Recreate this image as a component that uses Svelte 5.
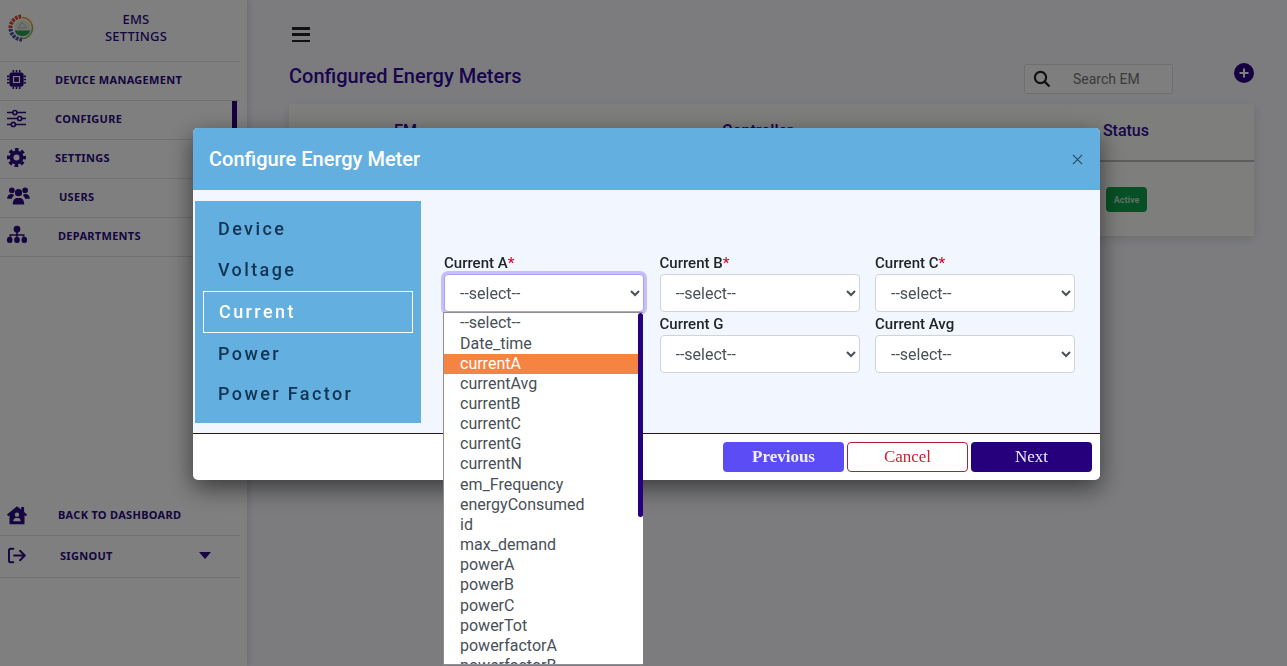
<script lang="ts">
  const navTop = [
    { label: 'DEVICE MANAGEMENT', icon: 'chip', indent: 55 },
    { label: 'CONFIGURE', icon: 'sliders', indent: 55, active: true },
    { label: 'SETTINGS', icon: 'cog', indent: 55 },
    { label: 'USERS', icon: 'users', indent: 59 },
    { label: 'DEPARTMENTS', icon: 'sitemap', indent: 58 }
  ];
  const tabs = ['Device', 'Voltage', 'Current', 'Power', 'Power Factor'];
  const fields = [
    { label: 'Current A', required: true, focused: true },
    { label: 'Current B', required: true },
    { label: 'Current C', required: true },
    { label: 'Current N', required: false, covered: true },
    { label: 'Current G', required: false },
    { label: 'Current Avg', required: false }
  ];
  const columns = ['--select--', 'Date_time', 'currentA', 'currentAvg', 'currentB', 'currentC', 'currentG', 'currentN',
    'em_Frequency', 'energyConsumed', 'id', 'max_demand', 'powerA', 'powerB', 'powerC', 'powerTot', 'powerfactorA', 'powerfactorB'];
</script>

{#snippet icon(name: string)}
  {#if name === 'users'}
    <svg class="nav-icon wide" viewBox="0 0 24 19" aria-hidden="true">
      <circle cx="5" cy="3.500" r="3" /><circle cx="19" cy="3.500" r="3" /><circle cx="12" cy="6" r="3.800" />
      <path d="M0 12.500c0-3 2-5 4.500-5 1.300 0 2.300.4 3 1.100C6 9.700 5.300 11.100 5 12.500zM24 12.500c0-3-2-5-4.500-5-1.300 0-2.300.4-3 1.100 1.500 1.100 2.200 2.500 2.500 3.900zM6 17.500c0-3.500 2-6 4.500-6h3c2.500 0 4.500 2.500 4.500 6v1H6z" />
    </svg>
  {:else}
    <svg class="nav-icon" class:mid={name === 'sitemap' || name === 'house'} viewBox="0 0 24 24" aria-hidden="true">
      {#if name === 'chip'}
        <path d="M6 3h12a3 3 0 0 1 3 3v12a3 3 0 0 1-3 3H6a3 3 0 0 1-3-3V6a3 3 0 0 1 3-3zm1.500 4.500v9h9v-9z" fill-rule="evenodd" />
        <rect x="9" y="9" width="6" height="6" />
        <path d="M7 0h2v3H7zM11 0h2v3h-2zM15 0h2v3h-2zM7 21h2v3H7zM11 21h2v3h-2zM15 21h2v3h-2zM0 7h3v2H0zM0 11h3v2H0zM0 15h3v2H0zM21 7h3v2h-3zM21 11h3v2h-3zM21 15h3v2h-3z" />
      {:else if name === 'sliders'}
        <g fill="none" stroke="currentColor" stroke-width="2">
          <path d="M0 4.500h7M12.500 4.500H24M0 12h13M19 12h5M0 19.500h5M10.500 19.500H24" />
          <circle cx="10" cy="4.500" r="2.600" /><circle cx="16" cy="12" r="2.600" /><circle cx="8" cy="19.500" r="2.600" />
        </g>
      {:else if name === 'cog'}
        <g fill="none" stroke="currentColor">
          <circle cx="12" cy="12" r="10" stroke-width="4" stroke-dasharray="4.500 3.354" stroke-dashoffset="2.250" />
          <circle cx="12" cy="12" r="6.300" stroke-width="5" />
        </g>
      {:else if name === 'sitemap'}
        <circle cx="12" cy="5" r="4" />
        <path d="M11 8h2v3h8v3h-2v-1h-6v1h-2v-1H5v1H3v-3h8z" />
        <rect x="0" y="14" width="6.500" height="7.500" rx="3" /><rect x="8.750" y="14" width="6.500" height="7.500" rx="3" /><rect x="17.500" y="14" width="6.500" height="7.500" rx="3" />
      {:else if name === 'house'}
        <path fill-rule="evenodd" d="M12 1.500l5 4V2.500h3.500v6L24 11.500l-1.500 2-1.500-1.200V23H3V12.300l-1.500 1.200L0 11.500zM12 9a2.600 2.600 0 1 0 0 5.200A2.600 2.600 0 0 0 12 9zm-4.500 10.500h9c0-2.500-1.500-4-3-4h-3c-1.500 0-3 1.500-3 4z" />
      {:else if name === 'signout'}
        <g fill="none" stroke="currentColor" stroke-width="2.400" stroke-linecap="round" stroke-linejoin="round">
          <path d="M8 3.500H4.500a2 2 0 0 0-2 2v13a2 2 0 0 0 2 2H8M9 12h13M16.500 6l6 6-6 6" />
        </g>
      {/if}
    </svg>
  {/if}
{/snippet}

<div class="page">
  <aside class="sidebar">
    <div class="brand">
      <svg class="logo" viewBox="0 0 28 28" aria-hidden="true">
        <path d="M14 25.500A11.500 11.500 0 0 1 2.500 14" fill="none" stroke="#4f4fa8" stroke-width="4" stroke-dasharray="2.600 1" />
        <path d="M2.500 14A11.500 11.500 0 0 1 14 2.500" fill="none" stroke="#d2442c" stroke-width="4" stroke-dasharray="2.600 1" />
        <path d="M14 3.500A10.500 10.500 0 0 1 24.500 14" fill="none" stroke="#e0a030" stroke-width="1.500" />
        <path d="M24.500 14A10.500 10.500 0 0 1 14 24.500" fill="none" stroke="#8bb04a" stroke-width="1.500" />
        <circle cx="14.500" cy="14" r="8.500" fill="#e6e8df" />
        <path d="M6.500 16.500h16a8.500 8.500 0 0 1-16 0z" fill="#2f9a55" />
        <path d="M10 14l4-6 3 4 2 2z" fill="none" stroke="#9aa" stroke-width="0.700" />
      </svg>
      <h1>EMS<br />SETTINGS</h1>
    </div>
    <nav class="nav-top">
      {#each navTop as item}
        <a href="#top" class="nav-item" class:active={item.active}>
          <span class="icon-slot">{@render icon(item.icon)}</span>
          <span style="margin-left: {item.indent - 40}px">{item.label}</span>
        </a>
      {/each}
    </nav>
    <nav class="nav-bottom">
      <a href="#top" class="nav-item slim">
        <span class="icon-slot">{@render icon('house')}</span>
        <span style="margin-left: 18px">BACK TO DASHBOARD</span>
      </a>
      <a href="#top" class="nav-item slim tall">
        <span class="icon-slot">{@render icon('signout')}</span>
        <span style="margin-left: 20px">SIGNOUT</span>
        <span class="caret"></span>
      </a>
    </nav>
  </aside>

  <main class="content">
    <div class="hamburger"><i></i><i></i><i></i></div>
    <div class="title-row">
      <h2>Configured Energy Meters</h2>
      <div class="search">
        <svg viewBox="0 0 24 24" width="18" height="18" aria-hidden="true"><circle cx="10" cy="10" r="7.500" fill="none" stroke="currentColor" stroke-width="2.800" /><path d="M15.500 15.500L22 22" stroke="currentColor" stroke-width="3" /></svg>
        <span>Search EM</span>
      </div>
      <svg class="plus" viewBox="0 0 20 20" aria-hidden="true"><circle cx="10" cy="10" r="10" /><path d="M10 5.500v9M5.500 10h9" stroke="#fff" stroke-width="2" /></svg>
    </div>
    <div class="meter-card">
      <div class="meter-head"><span class="c-em">EM</span><span class="c-ctrl">Controller</span><span class="c-status">Status</span></div>
      <div class="meter-row"><span class="badge">Active</span></div>
    </div>
  </main>
</div>

<div class="backdrop">
  <section class="modal">
    <header class="modal-head">
      <h3>Configure Energy Meter</h3>
      <svg class="close" viewBox="0 0 12 12" aria-hidden="true"><path d="M1 1l10 10M11 1L1 11" /></svg>
    </header>
    <div class="modal-body">
      <ul class="tabs">
        {#each tabs as tab}
          <li class:current={tab === 'Current'}>{tab}</li>
        {/each}
      </ul>
      <form class="fields">
        {#each fields as field}
          <div class="field" class:covered={field.covered}>
            <label for={field.label}>{field.label}{#if field.required}<b>*</b>{/if}</label>
            <select id={field.label} class:focused={field.focused}><option>--select--</option></select>
            {#if field.focused}
              <ul class="options">
                {#each columns as column}
                  <li class:hover={column === 'currentA'}>{column}</li>
                {/each}
                <span class="thumb"></span>
              </ul>
            {/if}
          </div>
        {/each}
      </form>
    </div>
    <footer class="modal-foot">
      <button class="prev">Previous</button>
      <button class="cancel">Cancel</button>
      <button class="next">Next</button>
    </footer>
  </section>
</div>

<style>
  :global(body) {
    margin: 0;
    background: #f8f9ff;
    font-family: Roboto, sans-serif;
    overflow: hidden;
  }
  .page {
    display: flex;
    height: 666px;
    overflow: hidden;
  }
  .sidebar {
    width: 247px;
    flex: none;
    background: #fff;
    box-shadow: 2px 0 6px rgba(0, 0, 0, 0.12);
    display: flex;
    flex-direction: column;
    color: #2a0a80;
  }
  .brand {
    height: 62px;
    box-sizing: border-box;
    display: flex;
    align-items: center;
    padding: 0 0 6px 8px;
    margin-right: 7px;
    border-bottom: 1px solid #e2e2e2;
  }
  .logo {
    width: 28px;
    height: 28px;
    flex: none;
  }
  .brand h1 {
    flex: 1;
    margin: 0;
    padding: 0 4px 0 0;
    text-align: center;
    font: 500 13px/17px "Noto Sans", sans-serif;
    color: #2a0a80;
    letter-spacing: 0.2px;
  }
  .nav-item {
    position: relative;
    display: flex;
    align-items: center;
    height: 39px;
    box-sizing: border-box;
    margin-right: 7px;
    padding: 0 0 2px 7px;
    border-bottom: 1px solid #e2e2e2;
    color: #2a0a80;
    font: 700 11px "Noto Sans", sans-serif;
    letter-spacing: 0.3px;
    text-decoration: none;
  }
  .nav-top .nav-item {
    padding-bottom: 4px;
  }
  .nav-item.active::after {
    content: "";
    position: absolute;
    right: 3px;
    top: 0;
    width: 5px;
    height: 100%;
    background: #2a0080;
  }
  .icon-slot {
    width: 33px;
    flex: none;
    display: flex;
  }
  .nav-icon {
    width: 19px;
    height: 19px;
    flex: none;
    fill: currentColor;
  }
  .nav-icon.wide {
    width: 23px;
    height: 18px;
  }
  .nav-icon.mid {
    width: 20px;
    height: 20px;
  }
  .nav-bottom {
    margin-top: auto;
    margin-bottom: 88px;
  }
  .slim {
    height: 40px;
  }
  .tall {
    height: 42px;
  }
  .caret {
    margin-left: 86px;
    border: 6.500px solid transparent;
    border-top: 7px solid #2a0a80;
    border-bottom: 0;
  }
  .content {
    flex: 1;
    min-width: 0;
    padding: 27px 33px 0 42px;
  }
  .hamburger {
    width: 18px;
    height: 15px;
    margin-left: 3px;
    display: flex;
    flex-direction: column;
    justify-content: space-between;
  }
  .hamburger i {
    height: 2.500px;
    background: #222;
  }
  .title-row {
    display: flex;
    align-items: flex-start;
    margin-top: 22px;
    height: 40px;
  }
  .title-row h2 {
    margin: 0;
    font: 500 20px/24px Roboto, sans-serif;
    color: #330a99;
    flex: 1;
  }
  .search {
    width: 149px;
    height: 30px;
    box-sizing: border-box;
    display: flex;
    align-items: center;
    gap: 22px;
    padding-left: 8px;
    border: 1px solid #ddd;
    border-radius: 3px;
    font-size: 14px;
    color: #777;
    background: #fcfcfc;
  }
  .search svg {
    color: #222;
    flex: none;
  }
  .plus {
    width: 20px;
    height: 20px;
    margin: -1px 0 0 61px;
    fill: #2a0080;
  }
  .meter-card {
    background: #fdfdfb;
    height: 132px;
    box-shadow: 0 3px 10px rgba(0, 0, 0, 0.12);
  }
  .meter-head {
    height: 56px;
    border-bottom: 2.500px solid #bbb;
    display: flex;
    align-items: flex-start;
    font-weight: 500;
    font-size: 16px;
    line-height: 54px;
    color: #330a99;
  }
  .c-em {
    margin-left: 105px;
  }
  .c-ctrl {
    margin-left: 305px;
  }
  .c-status {
    margin-left: auto;
    margin-right: 105px;
  }
  .meter-row {
    display: flex;
    justify-content: flex-end;
    padding: 25px 107px 0 0;
  }
  .badge {
    width: 41px;
    height: 25px;
    border-radius: 4px;
    background: #0fa04a;
    color: #b5e0c4;
    font-size: 9px;
    font-weight: 700;
    display: flex;
    align-items: center;
    justify-content: center;
  }
  .backdrop {
    position: fixed;
    inset: 0;
    background: rgba(0, 0, 0, 0.5);
    overflow: hidden;
  }
  .modal {
    position: absolute;
    left: 193px;
    top: 128px;
    width: 907px;
    height: 352px;
    border-radius: 5px;
    background: #fff;
    display: flex;
    flex-direction: column;
    box-shadow: 0 8px 24px rgba(0, 0, 0, 0.55);
  }
  .modal-head {
    height: 62px;
    flex: none;
    background: #63b0e0;
    border-radius: 5px 5px 0 0;
    display: flex;
    align-items: center;
    justify-content: space-between;
    padding: 0 17px 0 16px;
  }
  .modal-head h3 {
    margin: 0;
    font: 500 20px Roboto, sans-serif;
    color: #fff;
  }
  .close {
    width: 11px;
    height: 11px;
    fill: none;
    stroke: #24485f;
    stroke-width: 1.200;
  }
  .modal-body {
    height: 244px;
    box-sizing: border-box;
    flex: none;
    background: #f2f6ff;
    border-bottom: 1px solid #2a0080;
    display: flex;
    padding: 11px 0 0 2px;
  }
  .tabs {
    width: 226px;
    height: 222px;
    box-sizing: border-box;
    margin: 0;
    padding: 7px 8px 0;
    list-style: none;
    background: #63b0e0;
    color: #123352;
    font-size: 18px;
    font-weight: 500;
    letter-spacing: 2.400px;
  }
  .tabs li {
    height: 41px;
    box-sizing: border-box;
    display: flex;
    align-items: center;
    padding-left: 14px;
    border: 1px solid transparent;
  }
  .tabs li:nth-child(2) {
    height: 42px;
    padding-bottom: 2px;
  }
  .tabs li:last-child {
    padding-bottom: 2px;
  }
  .tabs li.current {
    height: 42px;
    padding: 0 0 2px 15px;
    color: #fff;
    border-color: #fff;
  }
  .fields {
    display: grid;
    grid-template-columns: repeat(3, 200px);
    column-gap: 15.500px;
    margin: 51px 0 0 23px;
    align-content: start;
  }
  .field {
    position: relative;
    height: 61px;
    display: flex;
    flex-direction: column;
  }
  .field.covered {
    visibility: hidden;
  }
  .field label {
    height: 22px;
    font-size: 15px;
    font-weight: 500;
    line-height: 23px;
    color: #212529;
  }
  .field label b {
    color: #d01030;
    font-weight: 500;
  }
  .field select {
    height: 38px;
    width: 100%;
    padding: 0 8px 0 11px;
    border: 1px solid #ced4da;
    border-radius: 4px;
    background-color: #fff;
    color: #495057;
    font: 400 16px Roboto, sans-serif;
    outline: none;
  }
  .field select.focused {
    border-color: #a9a0f0;
    box-shadow: 0 0 0 3px #c5c0f7;
  }
  .options {
    position: absolute;
    z-index: 3;
    left: -1px;
    top: 61px;
    width: 200px;
    height: 353px;
    box-sizing: border-box;
    margin: -1px 0 0;
    padding: 0.400px 0 0;
    list-style: none;
    overflow: hidden;
    background: #fff;
    border: 1px solid #8d8d99;
    border-right: 0;
    color: #495057;
    font-size: 16px;
    line-height: 20.150px;
  }
  .options li {
    padding-left: 16px;
    white-space: nowrap;
  }
  .options li.hover {
    background: #f58442;
    color: #fff;
    margin-right: 5px;
  }
  .thumb {
    position: absolute;
    right: 0;
    top: 0;
    width: 5px;
    height: 204px;
    border-radius: 2.500px;
    background: #26007c;
  }
  .modal-foot {
    flex: 1;
    display: flex;
    justify-content: flex-end;
    align-items: flex-start;
    gap: 3px;
    padding: 8px 8px 0 0;
  }
  .modal-foot button {
    width: 121px;
    height: 30px;
    box-sizing: border-box;
    border-radius: 4px;
    font: 400 17px "Liberation Serif", serif;
    border: 1px solid transparent;
  }
  .prev {
    background: #5c4cf6;
    color: #f0efff;
    font-weight: 700 !important;
  }
  .cancel {
    background: #fff;
    color: #cc1f2f;
    border-color: #b0203a !important;
  }
  .next {
    background: #26007c;
    color: #efeaff;
  }
</style>
